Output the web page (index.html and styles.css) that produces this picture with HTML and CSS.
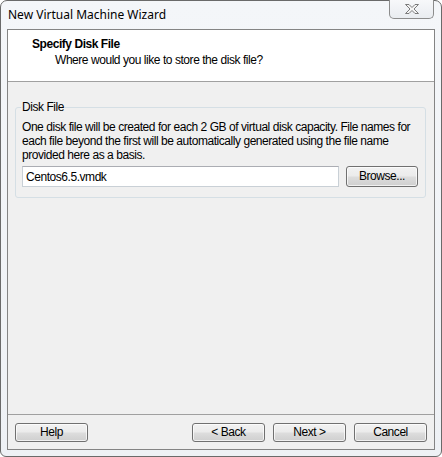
FILE: index.html
```html
<!DOCTYPE html>
<html lang="en">
<head>
  <meta charset="UTF-8" />
  <title>New Virtual Machine Wizard</title>
  <link rel="stylesheet" href="styles.css">
</head>
<body>

  <div class="window">
    <!-- Title bar -->
    <div class="titlebar">
      <span class="title">New Virtual Machine Wizard</span>
      <div class="close">
        <svg width="16" height="12" viewBox="0 0 16 12">
          <path d="M1.5 1.5 H5 L8 4.5 L11 1.5 H14.5 L10 6 L14.5 10.5 H11 L8 7.5 L5 10.5 H1.5 L6 6 Z"
                fill="#f4f4f4" stroke="#7a7a7a" stroke-width="1" stroke-linejoin="round" />
        </svg>
      </div>
    </div>

    <div class="client">
      <!-- Wizard header -->
      <div class="header">
        <div class="header-title">Specify Disk File</div>
        <div class="header-sub">Where would you like to store the disk file?</div>
      </div>

      <!-- Page content -->
      <div class="content">
        <fieldset class="group">
          <legend>Disk File</legend>
          <p class="info">One disk file will be created for each 2 GB of virtual disk capacity. File names for each file beyond the first will be automatically generated using the file name provided here as a basis.</p>
          <div class="file-row">
            <input type="text" class="file-input" value="Centos6.5.vmdk" />
            <button class="btn browse">Browse...</button>
          </div>
        </fieldset>
      </div>

      <!-- Buttons -->
      <div class="footer">
        <button class="btn">Help</button>
        <div class="spacer"></div>
        <button class="btn">&lt; Back</button>
        <button class="btn">Next &gt;</button>
        <button class="btn">Cancel</button>
      </div>
    </div>
  </div>

</body>
</html>
```

FILE: styles.css
```css
body {
  margin: 0;
  background: #ffffff;
  font-family: "Liberation Sans", Arial, sans-serif;
  font-size: 12px;
  letter-spacing: -0.45px;
  color: #000;
}
.window {
  box-sizing: border-box;
  width: 442px;
  height: 457px;
  border: 1px solid #6a6a6a;
  border-radius: 7px 7px 6px 6px;
  background: linear-gradient(180deg, #f4f6f9 0%, #eef1f5 100%);
  padding: 0 6px 6px;
  display: flex;
  flex-direction: column;
}
.titlebar {
  height: 28px;
  display: flex;
  align-items: flex-start;
  justify-content: space-between;
}
.title {
  margin-top: 5px;
  margin-left: 1px;
  font-family: "Noto Sans", sans-serif;
  font-size: 12px;
  letter-spacing: 0;
  color: #000;
}
.close {
  width: 45px;
  height: 19px;
  margin-top: -1px;
  margin-right: 1px;
  box-sizing: border-box;
  border: 1px solid #8c8c8c;
  border-top: none;
  border-radius: 0 0 5px 5px;
  background: linear-gradient(180deg, #f7f8fa, #e9ecf0);
  display: flex;
  align-items: center;
  justify-content: center;
}
.client {
  flex: 1;
  display: flex;
  flex-direction: column;
  border: 1px solid #848484;
  background: #f0f0f0;
}
.header {
  height: 52px;
  background: #fff;
  border-bottom: 1px solid #a0a0a0;
  padding-left: 24px;
  box-sizing: border-box;
}
.header-title {
  font-weight: bold;
  margin-top: 7px;
  line-height: 15px;
}
.header-sub {
  padding-left: 23px;
  margin-top: 1px;
  line-height: 15px;
}
.content {
  flex: 1;
  padding: 18px 8px 0 7px;
}
.group {
  margin: 0;
  border: 1px solid #d5dfe5;
  border-radius: 3px;
  padding: 2px 7px 10px 6px;
}
.group legend {
  padding: 0 1px;
  margin-left: -1px;
  line-height: 14px;
}
.info {
  margin: 4px 0 4px;
  line-height: 14px;
}
.file-row {
  display: flex;
  align-items: center;
}
.file-input {
  flex: none;
  width: 317px;
  height: 21px;
  box-sizing: border-box;
  border: 1px solid #c9d0d6;
  border-top-color: #abadb3;
  padding: 0 3px;
  font-family: inherit;
  font-size: 12px;
  letter-spacing: inherit;
  background: #fff;
  outline: none;
}
.btn {
  width: 73px;
  height: 19px;
  box-sizing: border-box;
  border: 1px solid #707070;
  border-radius: 3px;
  background: linear-gradient(180deg, #f2f2f2 0%, #ebebeb 48%, #dddddd 52%, #cfcfcf 100%);
  box-shadow: inset 0 0 0 1px rgba(255, 255, 255, 0.7);
  font-family: inherit;
  font-size: 12px;
  letter-spacing: inherit;
  line-height: 15px;
  padding: 0;
  color: #000;
}
.browse {
  width: 72px;
  height: 21px;
  margin-left: 7px;
}
.footer {
  height: 35px;
  border-top: 1px solid #a0a0a0;
  display: flex;
  align-items: center;
  gap: 8px;
  padding: 0 7px 0 7px;
  box-sizing: border-box;
}
.spacer {
  flex: 1;
}
```
